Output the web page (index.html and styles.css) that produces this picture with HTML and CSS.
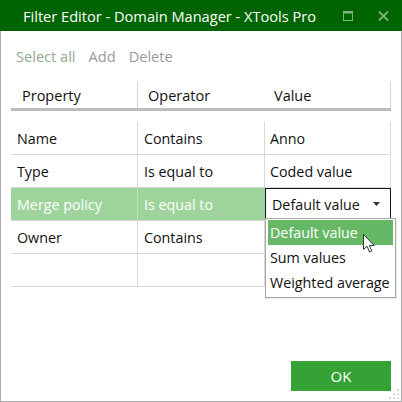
FILE: index.html
```html
<!DOCTYPE html>
<html>
<head>
<meta charset="utf-8">
<link rel="stylesheet" href="styles.css">
</head>
<body>
<div class="window">
  <div class="titlebar">
    <span class="title">Filter Editor - Domain Manager - XTools Pro</span>
    <div class="tb-icons">
      <svg class="ic-max" width="10" height="10" viewBox="0 0 10 10"><rect x="0.5" y="0.5" width="9" height="9" fill="none" stroke="#7db67d" stroke-width="1"/><rect x="0" y="0" width="10" height="2.5" fill="#7db67d"/></svg>
      <svg class="ic-close" width="11" height="10" viewBox="0 0 11 10"><path d="M1 0.5 L10 9.5 M10 0.5 L1 9.5" stroke="#7db67d" stroke-width="1.8"/></svg>
    </div>
  </div>
  <div class="content">
    <div class="toolbar">
      <span class="tool tool-sel">Select all</span>
      <span class="tool">Add</span>
      <span class="tool">Delete</span>
    </div>
    <div class="grid">
      <div class="hrow">
        <div class="hcell c1">Property</div>
        <div class="hcell c2">Operator</div>
        <div class="hcell c3">Value</div>
      </div>
      <div class="rows">
        <div class="row">
          <div class="cell c1">Name</div>
          <div class="cell c2">Contains</div>
          <div class="cell c3">Anno</div>
        </div>
        <div class="row">
          <div class="cell c1">Type</div>
          <div class="cell c2">Is equal to</div>
          <div class="cell c3">Coded value</div>
        </div>
        <div class="row selected">
          <div class="cell c1">Merge policy</div>
          <div class="cell c2">Is equal to</div>
          <div class="cell c3 editcell">
            <div class="combo">
              <span>Default value</span>
              <svg class="caret" width="7" height="4" viewBox="0 0 7 4"><path d="M0 0 L7 0 L3.5 4 Z" fill="#333"/></svg>
            </div>
            <div class="droplist">
              <div class="item active">Default value</div>
              <div class="item">Sum values</div>
              <div class="item">Weighted average</div>
            </div>
            <svg class="cursor" width="13" height="20" viewBox="0 0 13 20"><path d="M0.5 0.5 L0.5 15.5 L4 12.2 L6.5 18 L8.8 17 L6.4 11.5 L11.2 11.5 Z" fill="#fff" stroke="#333" stroke-width="1"/></svg>
          </div>
        </div>
        <div class="row">
          <div class="cell c1">Owner</div>
          <div class="cell c2">Contains</div>
          <div class="cell c3"></div>
        </div>
        <div class="row">
          <div class="cell c1"></div>
          <div class="cell c2"></div>
          <div class="cell c3"></div>
        </div>
      </div>
    </div>
    <div class="footer">
      <button class="ok">OK</button>
    </div>
    <svg class="grip" width="11" height="11" viewBox="0 0 11 11">
      <rect x="8.5" y="0.5" width="1.5" height="1.5" fill="#b4c0d4"/>
      <rect x="8.5" y="4.5" width="1.5" height="1.5" fill="#b4c0d4"/>
      <rect x="4.5" y="4.5" width="1.5" height="1.5" fill="#b4c0d4"/>
      <rect x="8.5" y="8.5" width="1.5" height="1.5" fill="#b4c0d4"/>
      <rect x="4.5" y="8.5" width="1.5" height="1.5" fill="#b4c0d4"/>
      <rect x="0.5" y="8.5" width="1.5" height="1.5" fill="#b4c0d4"/>
    </svg>
  </div>
</div>
</body>
</html>
```

FILE: styles.css
```css
* { box-sizing: border-box; }
html, body { margin: 0; padding: 0; background: #fff; }
body {
  font-family: "Open Sans", "Noto Sans", "DejaVu Sans", sans-serif;
  font-size: 14.3px;
  color: #111;
}
.window {
  width: 402px;
  height: 402px;
  display: flex;
  flex-direction: column;
}
.titlebar {
  height: 31px;
  background: #006400;
  color: #fff;
  display: flex;
  align-items: center;
  padding-left: 23px;
  font-size: 14.6px;
}
.title { flex: 1; white-space: nowrap; }
.tb-icons {
  display: flex;
  align-items: center;
  padding-right: 13px;
}
.tb-icons svg { display: block; }
.ic-max { margin-right: 25px; }
.content {
  flex: 1;
  position: relative;
  border: 1px solid #ababab;
  border-top: none;
  padding: 0 10px 10px 10px;
  display: flex;
  flex-direction: column;
}
.toolbar {
  margin-top: 13px;
  height: 24px;
  display: flex;
  align-items: center;
  padding-left: 5px;
  gap: 13px;
  font-size: 14.6px;
  color: #9a9a9a;
}
.tool-sel { color: #8fab8f; }
.grid { margin-top: 13px; }
.hrow {
  display: grid;
  grid-template-columns: 127px 127px 126px;
  height: 30px;
  border-bottom: 3px solid #bcbcbc;
}
.hcell {
  display: flex;
  align-items: center;
  padding-top: 2px;
  font-size: 14.5px;
}
.hcell.c1 { padding-left: 11px; border-right: 1px solid #d4d4d4; }
.hcell.c2 { padding-left: 10px; }
.hcell.c3 { padding-left: 9px; border-right: 1px solid #d4d4d4; }
.rows { margin-top: 11px; }
.row {
  display: grid;
  grid-template-columns: 127px 127px 126px;
  height: 33px;
  border-bottom: 1px solid #d8d8d8;
}
.cell {
  display: flex;
  align-items: center;
  border-right: 1px solid #d8d8d8;
  padding-left: 6px;
  white-space: nowrap;
}
.cell.c3 { padding-left: 5px; }
.row.selected .c1, .row.selected .c2 {
  background: #9ed49c;
  color: #fff;
  border-right-color: #9ed49c;
}
.row.selected .c1 { border-right-color: #b9dfb7; }
.editcell {
  position: relative;
  padding: 0 !important;
  align-items: stretch;
}
.combo {
  flex: 1;
  border: 1px solid #1a1a1a;
  display: flex;
  align-items: center;
  justify-content: space-between;
  padding: 0 10px 0 6px;
  margin-right: -1px;
  background: #fff;
}
.caret { display: block; }
.droplist {
  position: absolute;
  left: 0;
  top: 30px;
  width: 131px;
  height: 80px;
  background: #fff;
  border: 1px solid #a8a8a8;
  padding: 1px 2px;
  z-index: 2;
  box-shadow: 1px 1px 1px rgba(0,0,0,0.08);
}
.item {
  height: 25px;
  display: flex;
  align-items: center;
  padding-left: 2px;
  white-space: nowrap;
}
.item.active { background: #66b866; color: #fff; }
.cursor {
  position: absolute;
  left: 98px;
  top: 46px;
  z-index: 3;
}
.footer {
  margin-top: auto;
  display: flex;
  justify-content: flex-end;
}
.ok {
  width: 100px;
  height: 30px;
  background: #34a234;
  color: #fff;
  border: none;
  font-family: inherit;
  font-size: 15px;
  padding: 0;
}
.grip {
  position: absolute;
  right: 1px;
  bottom: 1px;
}
```
